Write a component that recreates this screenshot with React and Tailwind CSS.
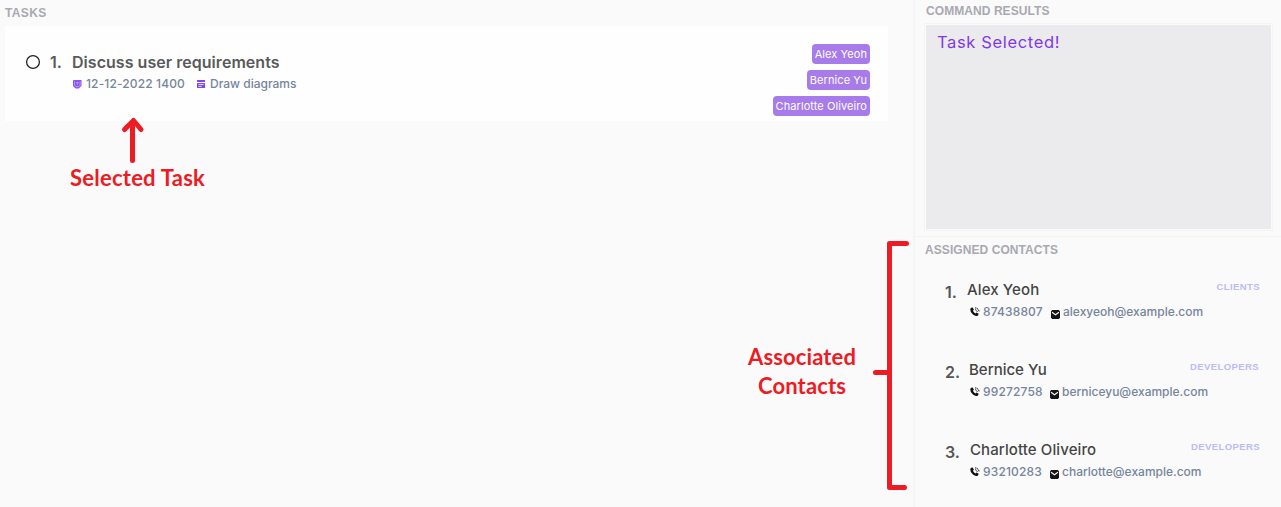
import React from "react";

const contacts = [
  { id: 1, name: "Alex Yeoh", phone: "87438807", email: "alexyeoh@example.com", tag: "CLIENTS",
    nameCls: "pl-[52px] tracking-[0.12px]", mailCls: "ml-2", tagCls: "pr-[21px]" },
  { id: 2, name: "Bernice Yu", phone: "99272758", email: "berniceyu@example.com", tag: "DEVELOPERS",
    nameCls: "pl-[54px]", mailCls: "ml-[7px]", tagCls: "pr-[22px]" },
  { id: 3, name: "Charlotte Oliveiro", phone: "93210283", email: "charlotte@example.com", tag: "DEVELOPERS",
    nameCls: "pl-[55px] tracking-[0.1px]", mailCls: "ml-[7px]", tagCls: "pr-[21px]" },
];

const assignees = ["Alex Yeoh", "Bernice Yu", "Charlotte Oliveiro"];

function PhoneIcon() {
  return (
    <svg className="mt-[4px] h-[10px] w-[10px] shrink-0" viewBox="0 0 10 10" fill="none">
      <path d="M1.200.8 2.700.5l1.200 2.200-1 1.100c.5 1.200 1.400 2.100 2.500 2.700l1.200-.9 2 1.200-.4 1.400c-.3.6-1 .8-1.800.7C3.400 8.600.6 5.900.3 2.500.3 1.700.6 1.100 1.200.8Z" fill="#111" />
      <path d="M5 .8c2.200.1 4 1.800 4.200 4.100M5 2.700c1.200.1 2.100 1 2.300 2.200" stroke="#222" strokeWidth="1" strokeDasharray="1.500 .5" />
    </svg>
  );
}

function MailIcon() {
  return (
    <svg className="mt-[7px] h-[9px] w-[9px] shrink-0" viewBox="0 0 9 9">
      <path d="M1.200 0h6.600L9 1.200v6.600L7.800 9H1.200L0 7.800V1.200Z" fill="#151515" />
      <path d="m1 2.300 3.500 2.500L8 2.300" fill="none" stroke="#fafafa" strokeWidth="1.100" />
    </svg>
  );
}

function Heading({ children, className }) {
  return (
    <h2 className={`font-['Liberation_Sans',sans-serif] text-[12px] leading-[14px] font-bold whitespace-nowrap text-[#a9a9b1] ${className}`}>
      {children}
    </h2>
  );
}

function Contact({ c }) {
  return (
    <li className="h-20">
      <div className="flex h-[23px] items-start">
        <span className="-mr-[100px] w-[100px] shrink-0 pt-[2px] pl-[30px] text-[16px] leading-5 font-semibold text-[#555]">{c.id}.</span>
        <span className={`text-[15px] leading-5 font-medium whitespace-nowrap text-[#454545] ${c.nameCls}`}>{c.name}</span>
        <span className={`ml-auto pt-[1px] font-['Liberation_Sans',sans-serif] text-[9.500px] leading-3 font-bold tracking-[0.4px] text-[#bbbbfb] ${c.tagCls}`}>{c.tag}</span>
      </div>
      <div className="flex h-[18px] items-start pl-[55px] text-[12px] leading-[18px] font-medium whitespace-nowrap text-[#76859b]">
        <PhoneIcon />
        <span className="ml-[3px] w-[60px] tracking-[0.15px]">{c.phone}</span>
        <span className={`flex items-start gap-[3px] ${c.mailCls}`}>
          <MailIcon />
          <span>{c.email}</span>
        </span>
      </div>
    </li>
  );
}

export default function App() {
  return (
    <div className="relative flex h-[507px] w-[1281px] overflow-hidden bg-[#fafafa] font-[Inter,sans-serif]">
      <main className="w-[913px] shrink-0 pt-[6px] pl-[5px]">
        <Heading className="tracking-[0.35px]">TASKS</Heading>
        <article className="mt-[6px] flex h-[95px] w-[883px] bg-[#fefefe]">
          <svg className="mt-[28px] ml-[20px] h-4 w-4 shrink-0" viewBox="0 0 16 16">
            <circle cx="8" cy="8" r="6.400" fill="none" stroke="#222" strokeWidth="1.300" />
          </svg>
          <span className="mt-[26px] ml-[9px] w-[22px] text-[16px] leading-5 font-semibold text-[#5a5a5a]">1.</span>
          <div className="pt-[26px]">
            <h3 className="text-[16px] leading-5 font-semibold tracking-[0.04px] whitespace-nowrap text-[#5a5a5a]">Discuss user requirements</h3>
            <div className="mt-[2px] flex h-[20px] items-center text-[12px] leading-5 font-medium whitespace-nowrap text-[#76859b]">
              <svg className="ml-[1px] h-[9px] w-[9px]" viewBox="0 0 9 9">
                <path d="M.5 0h7.500l.5.500v5L6 8.500H2.500L0 6V.5Z" fill="#8b50ed" />
                <path d="M1.500 1.500v3.700l1.300 1.500h3l1.300-1.500V1.500M3.200 2.500h2.300M4.400 2.500v2.500" fill="none" stroke="#d3bafa" strokeWidth=".7" />
              </svg>
              <span className="ml-[4px] w-[100px] tracking-[0.13px]">12-12-2022 1400</span>
              <svg className="ml-[11px] h-[8px] w-[8px]" viewBox="0 0 8 8">
                <path d="M0 0h8v2H0ZM0 3h8v5H0Z" fill="#8146ed" />
                <path d="M1.500 4.500h5M1.500 6.500h3" stroke="#fff" strokeWidth=".8" />
              </svg>
              <span className="ml-[5px]">Draw diagrams</span>
            </div>
          </div>
          <div className="mr-[18px] ml-auto flex flex-col items-end gap-[6px] pt-[18px]">
            {assignees.map((a) => (
              <span key={a} className="h-5 rounded-[4px] bg-[#a77bea] px-[3px] text-[11px] leading-5 tracking-[0.08px] whitespace-nowrap text-white">{a}</span>
            ))}
          </div>
        </article>
      </main>

      <aside className="flex w-[368px] shrink-0 flex-col border-l-2 border-[#f5f5f6]">
        <section className="h-[237px] shrink-0 border-b border-[#f3f3f4] pt-[4px] pl-[9px]">
          <Heading className="pl-[2px] tracking-[0.07px]">COMMAND RESULTS</Heading>
          <div className="mt-[5px] h-[208px] w-[349px] border border-[#f4f4f5] p-[1px]">
            <div className="h-full w-full bg-[#ebebed] pt-[7px] pl-[11px] text-[16.500px] leading-5 font-normal tracking-[0.65px] text-[#8038e8]">Task Selected!</div>
          </div>
        </section>
        <section className="shrink-0 pt-[6px]">
          <Heading className="pl-[10px] tracking-[0.07px]">ASSIGNED CONTACTS</Heading>
          <ul className="mt-[23px]">
            {contacts.map((c) => <Contact key={c.id} c={c} />)}
          </ul>
        </section>
      </aside>

      <div className="absolute top-[164px] left-[70px] font-[Lato,sans-serif] text-[22px] leading-7 font-bold tracking-[0.24px] whitespace-nowrap text-[#ed1c24]">Selected Task</div>
      <div className="absolute top-[342px] left-[742px] w-[120px] text-center font-[Lato,sans-serif] text-[22px] leading-[29px] font-bold tracking-[0.12px] text-[#ed1c24]">Associated Contacts</div>
      <svg className="pointer-events-none absolute inset-0 h-[507px] w-[1281px]" viewBox="0 0 1281 507" fill="none" stroke="#ed1c24" strokeWidth="5" strokeLinecap="round" strokeLinejoin="round">
        <path d="M132.500 160.500V122M124.500 129.500l9-9 7.500 9" />
        <path d="M906.500 243.500H889.500V487.500H904.500M875.500 372.500H889.500" />
      </svg>
    </div>
  );
}
